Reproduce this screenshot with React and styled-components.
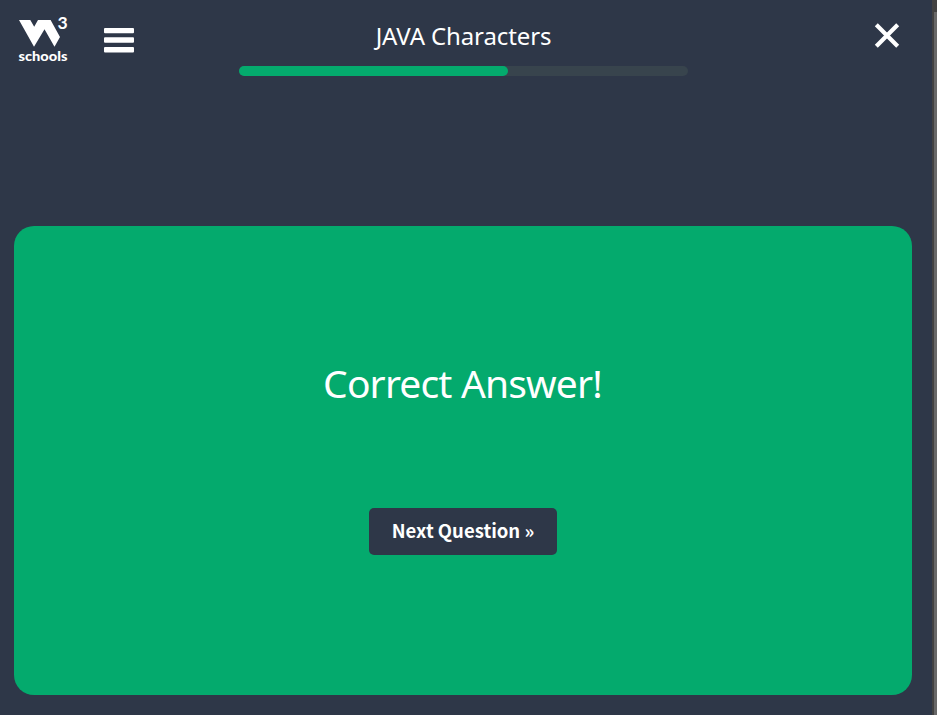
import React from "react";
import styled, { createGlobalStyle } from "styled-components";

const Global = createGlobalStyle`
  * { box-sizing: border-box; }
  body { margin: 0; background: #2e3748; overflow: hidden; }
`;

const Page = styled.div`
  display: flex;
  height: 715px;
  background: #2e3748;
  color: #fff;
  font-family: "Noto Sans", sans-serif;
`;

const Main = styled.main`
  flex: 1;
  display: flex;
  flex-direction: column;
  gap: 146px;
  padding: 0 20px 20px 14px;
`;

const Header = styled.header`
  height: 80px;
  display: grid;
  grid-template-columns: 225px 449px 1fr;
  align-items: start;
`;

const Brand = styled.div`
  display: flex;
  gap: 33px;
`;

const Logo = styled.svg`
  width: 56px;
  height: 70px;
`;

const LogoText = styled.text`
  font-family: Lato, sans-serif;
  font-size: ${(p) => p.$size}px;
  font-weight: ${(p) => p.$weight};
`;

const MenuButton = styled.button`
  width: 32px;
  height: 60px;
  padding: 28px 0 0 1px;
  border: 0;
  background: none;
  display: flex;
  flex-direction: column;
`;

const MenuIcon = styled.svg`
  width: 30px;
  height: 25px;
  flex: none;
`;

const Progress = styled.div`
  display: flex;
  flex-direction: column;
  align-items: center;
`;

const Title = styled.h1`
  margin: 0;
  height: 66px;
  padding-top: 18px;
  font-size: 24px;
  line-height: 36px;
  font-weight: 400;
  letter-spacing: -0.12px;
  white-space: nowrap;
`;

const Track = styled.div`
  width: 449px;
  height: 10px;
  border-radius: 5px;
  background: #38444d;
`;

const Fill = styled.div`
  width: ${(p) => p.$percent}%;
  height: 100%;
  border-radius: 5px;
  background: #04aa6d;
`;

const CloseButton = styled.button`
  justify-self: end;
  border: 0;
  background: none;
  padding: 22px 11px 0 0;
  display: flex;
`;

const CloseIcon = styled.svg`
  width: 28px;
  height: 28px;
`;

const Card = styled.section`
  width: 898px;
  height: 469px;
  border-radius: 20px;
  background: #04aa6d;
  display: flex;
  flex-direction: column;
  align-items: center;
  padding-top: 127px;
`;

const Message = styled.h2`
  margin: 0 0 95px;
  padding-right: 1px;
  font-size: 39px;
  line-height: 60px;
  font-weight: 400;
  letter-spacing: -0.85px;
  white-space: nowrap;
`;

const NextButton = styled.button`
  width: 188px;
  height: 47px;
  padding: 0 0 3px;
  border: 0;
  border-radius: 5px;
  background: #2e3748;
  color: #fff;
  font: 700 18.5px/43px "Noto Sans CJK SC", sans-serif;
  white-space: nowrap;
`;

const Scrollbar = styled.div`
  width: 5px;
  padding: 12px 0 0 2px;
  background: #424242;
`;

const Thumb = styled.div`
  height: 100%;
  background: #686868;
`;

export default function App() {
  return (
    <>
      <Global />
      <Page>
        <Main>
          <Header>
            <Brand>
              <Logo viewBox="14 0 56 70" fill="#fff" aria-label="W3Schools">
                <path d="M19 20H30.3L34.2 26.8L38 20H50.6L60 37L54.5 46.7L44.5 29.2L34 46.7Z" />
                <LogoText $size={17.5} $weight={700} x="57.5" y="29" textLength="10.2" lengthAdjust="spacingAndGlyphs">3</LogoText>
                <LogoText $size={13} $weight={900} x="18.5" y="61" textLength="49" lengthAdjust="spacingAndGlyphs">schools</LogoText>
              </Logo>
              <MenuButton aria-label="Menu">
                <MenuIcon viewBox="0 0 30 25" fill="#fff">
                  <rect width="30" height="5.2" rx="1" />
                  <rect y="9.3" width="30" height="5.5" rx="1" />
                  <rect y="19" width="30" height="5.5" rx="1" />
                </MenuIcon>
              </MenuButton>
            </Brand>
            <Progress>
              <Title>JAVA Characters</Title>
              <Track><Fill $percent={60} /></Track>
            </Progress>
            <CloseButton aria-label="Close">
              <CloseIcon viewBox="0 0 28 28" stroke="#fff" strokeWidth="4.2">
                <path d="M3.3 2.8L24.7 24.2M24.7 2.8L3.3 24.2" />
              </CloseIcon>
            </CloseButton>
          </Header>
          <Card>
            <Message>Correct Answer!</Message>
            <NextButton>Next Question »</NextButton>
          </Card>
        </Main>
        <Scrollbar><Thumb /></Scrollbar>
      </Page>
    </>
  );
}
